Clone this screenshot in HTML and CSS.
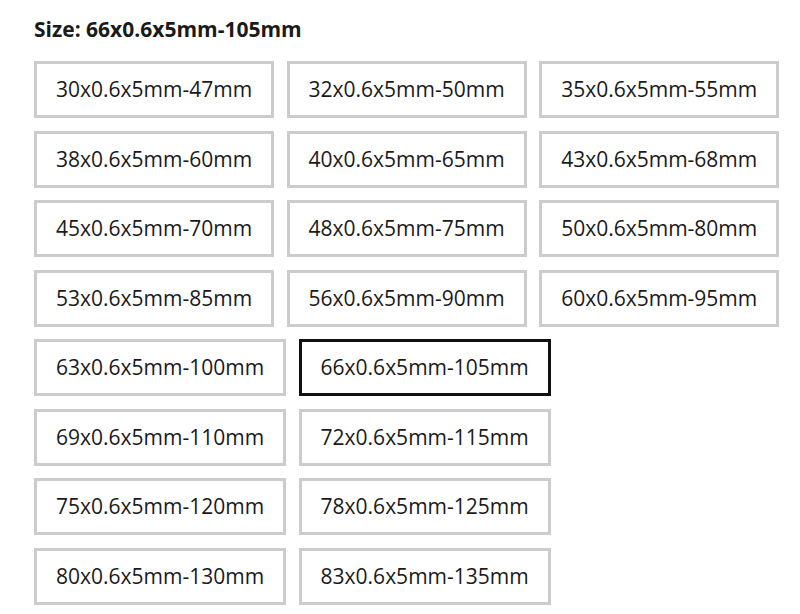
FILE: index.html
```html
<!DOCTYPE html>
<html lang="en">
<head>
    <meta charset="UTF-8">
    <meta name="viewport" content="width=device-width, initial-scale=1.0">
    <title>Size options</title>
    <link rel="stylesheet" href="styles.css">
</head>
<body>
    <div class="variant-picker">
        <div class="variant-label">Size: <span id="selected-size">66x0.6x5mm-105mm</span></div>
        <div class="variant-options">
            <button class="variant-option">30x0.6x5mm-47mm</button>
            <button class="variant-option">32x0.6x5mm-50mm</button>
            <button class="variant-option">35x0.6x5mm-55mm</button>
            <button class="variant-option">38x0.6x5mm-60mm</button>
            <button class="variant-option">40x0.6x5mm-65mm</button>
            <button class="variant-option">43x0.6x5mm-68mm</button>
            <button class="variant-option">45x0.6x5mm-70mm</button>
            <button class="variant-option">48x0.6x5mm-75mm</button>
            <button class="variant-option">50x0.6x5mm-80mm</button>
            <button class="variant-option">53x0.6x5mm-85mm</button>
            <button class="variant-option">56x0.6x5mm-90mm</button>
            <button class="variant-option">60x0.6x5mm-95mm</button>
            <button class="variant-option">63x0.6x5mm-100mm</button>
            <button class="variant-option selected">66x0.6x5mm-105mm</button>
            <button class="variant-option">69x0.6x5mm-110mm</button>
            <button class="variant-option">72x0.6x5mm-115mm</button>
            <button class="variant-option">75x0.6x5mm-120mm</button>
            <button class="variant-option">78x0.6x5mm-125mm</button>
            <button class="variant-option">80x0.6x5mm-130mm</button>
            <button class="variant-option">83x0.6x5mm-135mm</button>
        </div>
    </div>
</body>
</html>
```

FILE: styles.css
```css
body {
    font-family: "Open Sans", "Liberation Sans", sans-serif;
    margin: 0;
    padding: 14px 10px 0 34px;
    color: #1a1a1a;
    background: #fff;
}

.variant-label {
    font-size: 21px;
    font-weight: bold;
    line-height: 30px;
    margin-bottom: 17px;
}

.variant-options {
    display: flex;
    flex-wrap: wrap;
    gap: 12.5px;
}

.variant-option {
    font-family: inherit;
    font-size: 21px;
    line-height: 23px;
    color: #1a1a1a;
    background: #fff;
    border: 3px solid #cccccc;
    padding: 14px 19px;
    cursor: pointer;
}

.variant-option.selected {
    border-color: #111;
}
```
